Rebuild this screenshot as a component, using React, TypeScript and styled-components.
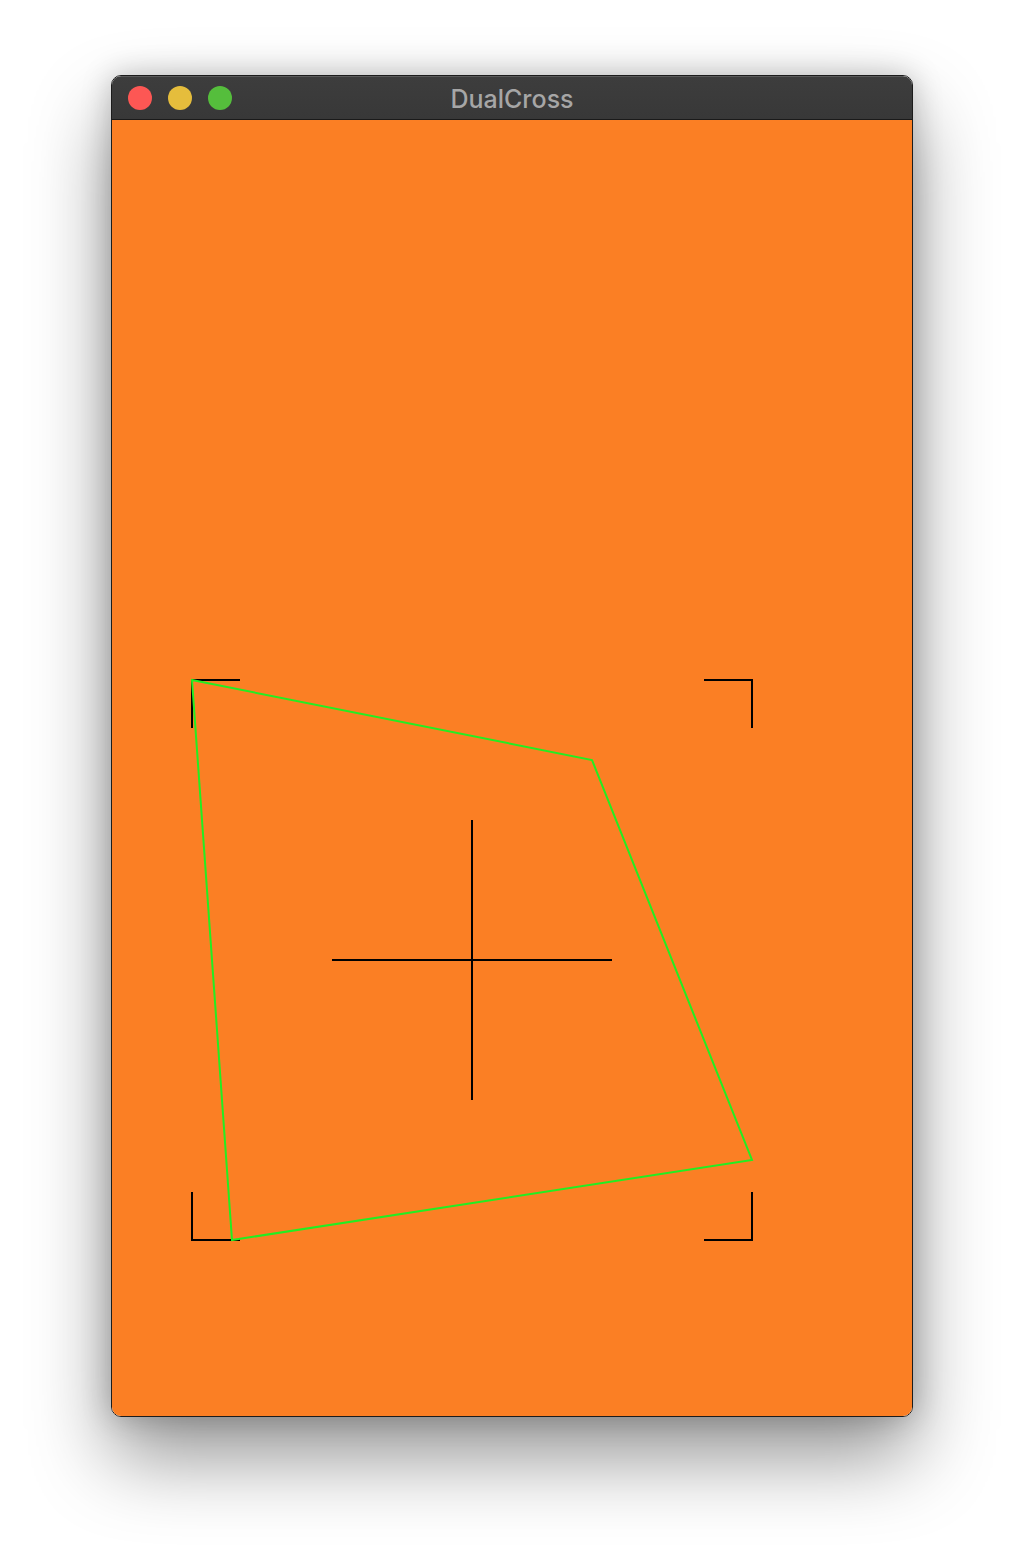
import React from "react";
import styled, { createGlobalStyle } from "styled-components";

const GlobalStyle = createGlobalStyle`
  html, body { margin: 0; padding: 0; background: #ffffff; }
  body { font-family: "Inter", "Liberation Sans", Arial, sans-serif; }
`;

const Desktop = styled.div`
  width: 1024px;
  height: 1564px;
  box-sizing: border-box;
  padding-top: 75px;
  display: flex;
  justify-content: center;
  align-items: flex-start;
  background: #ffffff;
`;

const Window = styled.div`
  width: 802px;
  box-sizing: border-box;
  border: 1px solid #1c1c1c;
  border-radius: 10px;
  overflow: hidden;
  display: flex;
  flex-direction: column;
  box-shadow: 0 40px 80px rgba(0, 0, 0, 0.42), 0 0 30px rgba(0, 0, 0, 0.22);
`;

const TitleBar = styled.div`
  height: 42px;
  display: flex;
  align-items: center;
  position: relative;
  background: linear-gradient(#3d3d3d, #383838);
  border-top: 1px solid #5a5a5a;
  border-bottom: 1px solid #1a1a1a;
`;

const Lights = styled.div`
  display: flex;
  gap: 16px;
  padding-left: 16px;
`;

const Light = styled.span<{ $color: string }>`
  width: 24px;
  height: 24px;
  border-radius: 50%;
  background: ${(p) => p.$color};
  display: block;
`;

const Title = styled.div`
  position: absolute;
  left: 0;
  right: 0;
  text-align: center;
  color: #a6a6a6;
  font-size: 25px;
  font-weight: 500;
  font-family: "Inter", "Liberation Sans", Arial, sans-serif;
  pointer-events: none;
  margin-top: 1px;
`;

const Canvas = styled.div`
  width: 800px;
  height: 1296px;
  background: #fb7f24;
  display: block;
`;

const stroke = "#000000";

export default function App() {
  const bx1 = 80, by1 = 560, bx2 = 640, by2 = 1120, arm = 48;
  return (
    <>
      <GlobalStyle />
      <Desktop>
        <Window>
          <TitleBar>
            <Lights>
              <Light $color="#fd5754" />
              <Light $color="#e5bd3c" />
              <Light $color="#55be3c" />
            </Lights>
            <Title>DualCross</Title>
          </TitleBar>
          <Canvas>
            <svg width="800" height="1296" viewBox="0 0 800 1296" style={{ display: "block" }}>
              <g stroke={stroke} strokeWidth="2" fill="none">
                <path d={`M${bx1} ${by1 + arm} V${by1} H${bx1 + arm}`} />
                <path d={`M${bx2 - arm} ${by1} H${bx2} V${by1 + arm}`} />
                <path d={`M${bx1} ${by2 - arm} V${by2} H${bx1 + arm}`} />
                <path d={`M${bx2 - arm} ${by2} H${bx2} V${by2 - arm}`} />
                <path d="M220 840 H500" />
                <path d="M360 700 V980" />
              </g>
              <polygon
                points="80,560 480,640 640,1040 120,1120"
                fill="none"
                stroke="#22ee22"
                strokeWidth="2"
              />
            </svg>
          </Canvas>
        </Window>
      </Desktop>
    </>
  );
}
